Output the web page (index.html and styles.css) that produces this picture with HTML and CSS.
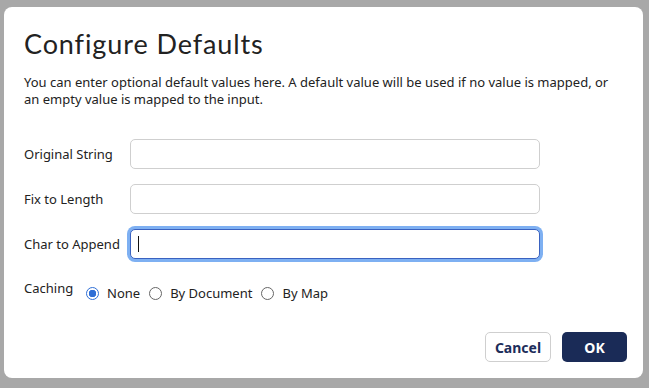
FILE: index.html
```html
<!DOCTYPE html>
<html lang="en">
<head>
  <meta charset="UTF-8" />
  <title>Configure Defaults</title>
  <link rel="stylesheet" href="styles.css">
</head>
<body>
  <div class="dialog">
    <h2>Configure Defaults</h2>
    <p class="intro">You can enter optional default values here. A default value will be used if no value is mapped, or an empty value is mapped to the input.</p>

    <div class="fields">
      <div class="form-row">
        <label for="original">Original String</label>
        <input type="text" id="original" />
      </div>
      <div class="form-row">
        <label for="fixLength">Fix to Length</label>
        <input type="text" id="fixLength" />
      </div>
      <div class="form-row">
        <label for="charAppend">Char to Append</label>
        <div class="input-wrap">
          <input type="text" id="charAppend" class="focused" />
          <span class="caret"></span>
        </div>
      </div>
      <div class="form-row caching">
        <span class="row-label">Caching</span>
        <div class="radios">
          <label class="radio"><span class="dot checked"></span>None</label>
          <label class="radio"><span class="dot"></span>By Document</label>
          <label class="radio"><span class="dot"></span>By Map</label>
        </div>
      </div>
    </div>

    <div class="actions">
      <button class="btn cancel">Cancel</button>
      <button class="btn ok">OK</button>
    </div>
  </div>
</body>
</html>
```
FILE: styles.css
```css
body {
  margin: 0;
  background: #a8a8a8;
  font-family: 'Noto Sans', 'Open Sans', sans-serif;
  color: #222;
}

.dialog {
  background: white;
  margin: 7px 6px 10px 4px;
  height: 371px;
  box-sizing: border-box;
  border-radius: 8px;
  padding: 22px 28px 0 20px;
}

h2 {
  font-family: 'Lato', sans-serif;
  font-weight: 400;
  font-size: 27px;
  letter-spacing: 0.9px;
  line-height: 30px;
  margin: 0 0 15px;
  color: #222;
}

.intro {
  font-size: 13px;
  line-height: 17px;
  margin: 0 0 31px;
}

.fields {
  display: flex;
  flex-direction: column;
  gap: 15px;
}

.form-row {
  display: flex;
  align-items: center;
  font-size: 13px;
}

.form-row > label,
.row-label {
  width: 106px;
}

input[type="text"] {
  display: block;
  width: 410px;
  height: 30px;
  flex-shrink: 0;
  box-sizing: border-box;
  border: 1px solid #cfcfcf;
  border-radius: 5px;
  padding: 0 7px;
  font-size: 13px;
}

.input-wrap {
  position: relative;
}

input.focused {
  border: 1px solid #3a62c0;
  box-shadow: 0 0 0 3px #7eb0f2;
}

.caret {
  position: absolute;
  left: 8px;
  top: 7px;
  width: 1px;
  height: 16px;
  background: #111;
}

.caching {
  align-items: flex-start;
  margin-top: 5px;
}

.radios {
  display: flex;
  gap: 9px;
  padding-top: 5px;
  margin-left: -44px;
}

.radio {
  display: flex;
  align-items: center;
  gap: 8px;
}

.dot {
  width: 13px;
  height: 13px;
  border: 1px solid #666;
  border-radius: 50%;
  box-sizing: border-box;
}

.dot.checked {
  border: 1px solid #2f6fd6;
  background: radial-gradient(circle, #2f6fd6 3.5px, white 4px);
}

.actions {
  display: flex;
  justify-content: flex-end;
  gap: 11px;
  margin: 30px -12px 0 0;
}

.btn {
  height: 30px;
  border-radius: 5px;
  font-family: 'Noto Sans', sans-serif;
  font-size: 14px;
  font-weight: bold;
  cursor: pointer;
}

.cancel {
  width: 66px;
  background: white;
  border: 1px solid #cfcfcf;
  color: #1c2d5a;
}

.ok {
  width: 65px;
  background: #1a2b57;
  border: none;
  color: white;
}
```
